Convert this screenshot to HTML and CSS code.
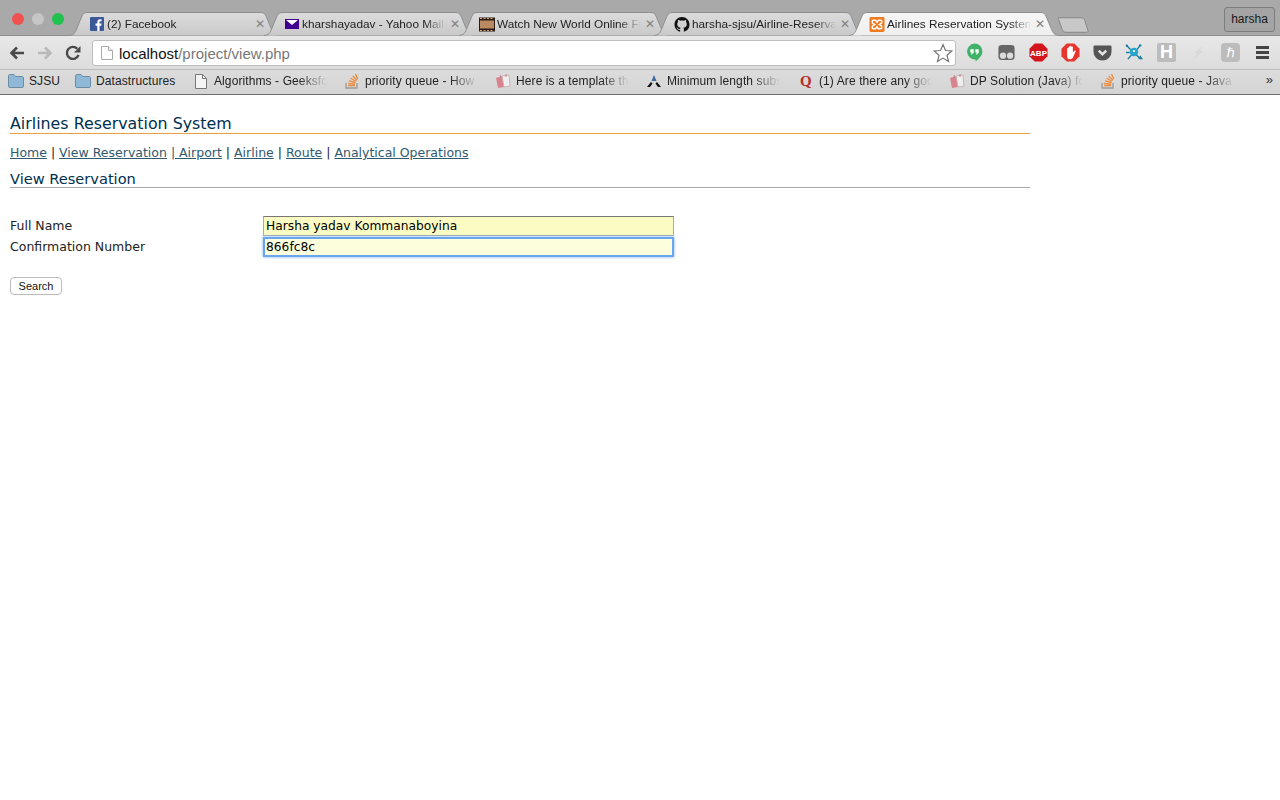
FILE: index.html
```html
<!DOCTYPE html>
<html>

<head>
    <meta name="viewport" content="width=device-width, minimum-scale=1">
    <title>Airlines Reservation System</title>
    <link rel="stylesheet" href="styles.css">
</head>

<body>
    <!-- browser window chrome -->
    <div class="chrome">
        <div class="tabstrip">
            <div class="lights">
                <span class="light light-red"></span>
                <span class="light light-grey"></span>
                <span class="light light-green"></span>
            </div>
            <div class="tabs">
                <div class="tab">
                    <svg class="tab-shape" viewBox="0 0 210 24" preserveAspectRatio="none"><defs><linearGradient id="inactive-tab" x1="0" y1="0" x2="0" y2="1"><stop offset="0" stop-color="#dcdcdc"/><stop offset="1" stop-color="#c9c9c9"/></linearGradient><linearGradient id="active-tab" x1="0" y1="0" x2="0" y2="1"><stop offset="0" stop-color="#f6f6f6"/><stop offset="1" stop-color="#efefef"/></linearGradient></defs><path d="M0 23.500C5 23 6 21 8 16L13 4C14 1.500 15.500 .5 19 .5H191C194.500 .5 196 1.500 197 4L202 16C204 21 205 23 210 23.500" fill="url(#inactive-tab)" stroke="#8f8f8f"/></svg>
                    <svg class="favicon" viewBox="0 0 14 14"><rect width="14" height="14" rx="1" fill="#3b5998"/><path d="M9.500 14V8.700H11.300L11.600 6.600H9.500V5.300C9.500 4.700 9.700 4.300 10.500 4.300H11.600V2.400C11.400 2.400 10.800 2.300 10 2.300 8.400 2.300 7.300 3.300 7.300 5.100V6.600H5.500V8.700H7.300V14Z" fill="#fff"/></svg>
                    <span class="tab-title">(2) Facebook</span>
                    <span class="tab-close">✕</span>
                </div>
                <div class="tab">
                    <svg class="tab-shape" viewBox="0 0 210 24" preserveAspectRatio="none"><path d="M0 23.500C5 23 6 21 8 16L13 4C14 1.500 15.500 .5 19 .5H191C194.500 .5 196 1.500 197 4L202 16C204 21 205 23 210 23.500" fill="url(#inactive-tab)" stroke="#8f8f8f"/></svg>
                    <svg class="favicon" viewBox="0 0 14 14"><rect y="2" width="14" height="10" fill="#400090"/><path d="M1 3L7 8 13 3" fill="#fff"/></svg>
                    <span class="tab-title">kharshayadav - Yahoo Mail</span>
                    <span class="tab-close">✕</span>
                </div>
                <div class="tab">
                    <svg class="tab-shape" viewBox="0 0 210 24" preserveAspectRatio="none"><path d="M0 23.500C5 23 6 21 8 16L13 4C14 1.500 15.500 .5 19 .5H191C194.500 .5 196 1.500 197 4L202 16C204 21 205 23 210 23.500" fill="url(#inactive-tab)" stroke="#8f8f8f"/></svg>
                    <svg class="favicon favicon-wide" viewBox="0 0 16 14"><rect width="16" height="14" fill="#2b1a10"/><rect x="1" y="3" width="14" height="8" fill="#b98a62"/><path d="M1 1H3M4.500 1H6.500M8 1H10M11.500 1H13.500M1 13H3M4.500 13H6.500M8 13H10M11.500 13H13.500" stroke="#c9a583" stroke-width="1"/></svg>
                    <span class="tab-title">Watch New World Online Free</span>
                    <span class="tab-close">✕</span>
                </div>
                <div class="tab">
                    <svg class="tab-shape" viewBox="0 0 210 24" preserveAspectRatio="none"><path d="M0 23.500C5 23 6 21 8 16L13 4C14 1.500 15.500 .5 19 .5H191C194.500 .5 196 1.500 197 4L202 16C204 21 205 23 210 23.500" fill="url(#inactive-tab)" stroke="#8f8f8f"/></svg>
                    <svg class="favicon favicon-wide" viewBox="0 0 16 16"><path fill="#111" d="M8 0C3.580 0 0 3.580 0 8c0 3.540 2.290 6.530 5.470 7.590.4.070.55-.17.55-.38 0-.19-.01-.82-.01-1.490-2.010.37-2.530-.49-2.690-.94-.09-.23-.48-.94-.82-1.130-.28-.15-.68-.52-.01-.53.63-.01 1.080.58 1.230.82.720 1.210 1.870.870 2.330.660.070-.520.280-.870.510-1.070-1.780-.2-3.640-.89-3.640-3.950 0-.870.310-1.590.820-2.150-.080-.2-.360-1.020.080-2.120 0 0 .670-.210 2.200.820.640-.180 1.320-.270 2-.270s1.360.090 2 .270c1.530-1.040 2.200-.820 2.200-.820.440 1.100.160 1.920.080 2.120.510.560.820 1.270.820 2.150 0 3.070-1.870 3.750-3.650 3.950.290.250.540.730.540 1.480 0 1.070-.010 1.930-.010 2.200 0 .210.150.460.550.380A8.013 8.013 0 0016 8c0-4.420-3.580-8-8-8z"/></svg>
                    <span class="tab-title">harsha-sjsu/Airline-Reservation</span>
                    <span class="tab-close">✕</span>
                </div>
                <div class="tab tab-active">
                    <svg class="tab-shape" viewBox="0 0 210 24" preserveAspectRatio="none"><path d="M0 23.500C5 23 6 21 8 16L13 4C14 1.500 15.500 .5 19 .5H191C194.500 .5 196 1.500 197 4L202 16C204 21 205 23 210 23.500" fill="url(#active-tab)" stroke="#8f8f8f"/></svg>
                    <svg class="favicon favicon-wide" viewBox="0 0 16 16"><rect width="16" height="16" rx="1.500" fill="#f07c22"/><path d="M4 3.500H6.500L8 5.500 9.500 3.500H12C13.500 3.500 13.500 6.500 12 7L10.500 8 12 9C13.500 9.500 13.500 12.500 12 12.500H9.500L8 10.500 6.500 12.500H4C2.500 12.500 2.500 9.500 4 9L5.500 8 4 7C2.500 6.500 2.500 3.500 4 3.500Z" fill="none" stroke="#fff" stroke-width="1.600"/></svg>
                    <span class="tab-title">Airlines Reservation System</span>
                    <span class="tab-close">✕</span>
                </div>
                <svg class="new-tab" viewBox="0 0 32 16"><path d="M.5 .5H24C26 .5 27 1.500 27.500 3L31 14C31.300 15 30.500 15.500 29.500 15.500H8C6 15.500 5 14.500 4.500 13L.5 2C.2 1 0 .5 .5 .5Z" fill="#c8c8c8" stroke="#858585"/></svg>
            </div>
            <div class="profile">harsha</div>
        </div>

        <div class="toolbar">
            <svg class="nav-icon" viewBox="0 0 16 16"><path d="M15 8H3M8 2.500L2.500 8 8 13.500" fill="none" stroke="#4a4a4a" stroke-width="2.600"/></svg>
            <svg class="nav-icon" viewBox="0 0 16 16"><path d="M1 8H13M8 2.500L13.500 8 8 13.500" fill="none" stroke="#b9b9b9" stroke-width="2.600"/></svg>
            <svg class="nav-icon" viewBox="0 0 16 16"><path d="M13.500 10A6 6 0 1 1 12.300 3.800" fill="none" stroke="#4a4a4a" stroke-width="2.400"/><path d="M15.500 1V7.500H9Z" fill="#4a4a4a"/></svg>
            <div class="omnibox">
                <svg class="page-icon" viewBox="0 0 12 14"><path d="M.5 .5H7.500L11.500 4.500V13.500H.5Z" fill="#fff" stroke="#aaa"/><path d="M7.500 .5V4.500H11.500" fill="#eee" stroke="#aaa"/></svg>
                <span class="url"><span class="url-host">localhost</span>/project/view.php</span>
                <svg class="star" viewBox="0 0 20 20"><path d="M10 1.500L12.500 7.500 18.800 8 14 12.200 15.500 18.500 10 15.100 4.500 18.500 6 12.200 1.200 8 7.500 7.500Z" fill="#fff" stroke="#777" stroke-width="1.200"/></svg>
            </div>
            <div class="extensions">
                <svg class="ext" viewBox="1.500 1 17 18"><path d="M10 1.500A7.500 7.500 0 0 1 17.500 9C17.500 13 14 16 11 18.500V16.500A7.500 7.500 0 0 1 10 1.500Z" fill="#3fb267"/><path d="M6 7H9.300V10.300L7.500 12H6.500L7.500 10H6ZM10.800 7H14V10.300L12.300 12H11.300L12.300 10H10.800Z" fill="#fff"/></svg>
                <svg class="ext" viewBox="0 0 20 20"><rect x="1.500" y="2" width="17" height="16" rx="3.500" fill="#666"/><circle cx="6.300" cy="13.300" r="3.300" fill="#ddd"/><circle cx="13.700" cy="13.300" r="3.300" fill="#ddd"/></svg>
                <svg class="ext" viewBox="0 0 20 20"><path d="M6 .5H14L19.500 6V14L14 19.500H6L.5 14V6Z" fill="#d3141c"/><text x="10" y="13.300" class="ext-abp">ABP</text></svg>
                <svg class="ext" viewBox="0 0 20 20"><path d="M6 .5H14L19.500 6V14L14 19.500H6L.5 14V6Z" fill="#e5352c"/><path d="M6.500 10V6C6.500 5 8 5 8 6V4.200C8 3.200 9.500 3.200 9.500 4.200V3.700C9.500 2.700 11 2.700 11 3.700V4.500C11 3.500 12.500 3.500 12.500 4.500V10L14 8.300C15 7.500 15.800 8.300 15.200 9.200L12.500 15.500C12 16.500 11 17 10 17H9C7.500 17 6.500 16 6.500 14.500Z" fill="#fff"/></svg>
                <svg class="ext" viewBox="0 0 20 20"><path d="M2 2.500H18C19 2.500 19.500 3 19.500 4V9.500A9.500 9 0 0 1 .5 9.500V4C.5 3 1 2.500 2 2.500Z" fill="#555"/><path d="M6 8L10 11.800 14 8" fill="none" stroke="#e4e4e4" stroke-width="2.600"/></svg>
                <svg class="ext" viewBox="0 0 20 20"><path d="M2 3L6 7M16 2.500L12.500 7M3 17L7 12.500M11.500 12L15 15.500M1 10H5" stroke="#1a7f9e" stroke-width="1.500"/><circle cx="9.500" cy="9.500" r="4.500" fill="#27a5cc"/><circle cx="9.500" cy="8.500" r="1.200" fill="#fff"/><path d="M14 17L19 17 16 13Z" fill="#1a7f9e"/><circle cx="2" cy="3" r="1.300" fill="#1a7f9e"/><circle cx="16" cy="2.500" r="1.300" fill="#1a7f9e"/></svg>
                <div class="ext ext-tile ext-h">H</div>
                <svg class="ext" viewBox="0 0 20 20"><path d="M16 2L5 10.500 9 11 3.500 18.500 15.500 8.500 11 8Z" fill="#d9d9d9"/></svg>
                <div class="ext ext-tile ext-k">ℏ</div>
                <div class="menu-icon"><span></span><span></span><span></span></div>
            </div>
        </div>

        <div class="bookmarks">
            <div class="bookmark bookmark-sjsu">
                <svg class="bm-icon" viewBox="0 0 16 14"><path d="M.5 2C.5 1 1 .5 2 .5H6L7.500 2.500H14C15 2.500 15.500 3 15.500 4V12C15.500 13 15 13.500 14 13.500H2C1 13.500 .5 13 .5 12Z" fill="#8fb8d6" stroke="#6c8ca4"/></svg>
                <span>SJSU</span>
            </div>
            <div class="bookmark bookmark-ds">
                <svg class="bm-icon" viewBox="0 0 16 14"><path d="M.5 2C.5 1 1 .5 2 .5H6L7.500 2.500H14C15 2.500 15.500 3 15.500 4V12C15.500 13 15 13.500 14 13.500H2C1 13.500 .5 13 .5 12Z" fill="#8fb8d6" stroke="#6c8ca4"/></svg>
                <span>Datastructures</span>
            </div>
            <div class="bookmark bookmark-long">
                <svg class="bm-icon bm-page" viewBox="0 0 12 15"><path d="M.5 .5H7.500L11.500 4.500V14.500H.5Z" fill="#f4f4f4" stroke="#777"/><path d="M7.500 .5V4.500H11.500" fill="none" stroke="#777"/></svg>
                <span class="bm-title">Algorithms - Geeksforgeeks</span>
            </div>
            <div class="bookmark bookmark-long">
                <svg class="bm-icon bm-so" viewBox="0 0 16 16"><path d="M2 10V15H13V10" fill="none" stroke="#9a9a9a" stroke-width="1.300"/><path d="M4 12.500H11M4.200 10.300L11 11.200M5 7.800L11.400 9.500M6.500 5.300L12 8.300M8.700 3L13 7.300M11.500 1L13.700 6" stroke="#ee8a3a" stroke-width="1.300"/></svg>
                <span class="bm-title">priority queue - How to</span>
            </div>
            <div class="bookmark bookmark-long">
                <svg class="bm-icon bm-gift" viewBox="0 0 16 16"><path d="M1 5L7 3 9 14 3 15Z" fill="#d8848e"/><path d="M7 3L14 2 15 13 9 14Z" fill="#eee" stroke="#c4a7ab" stroke-width=".8"/><path d="M5 2L6 5M11 1L11 4" stroke="#c4838c"/></svg>
                <span class="bm-title">Here is a template that</span>
            </div>
            <div class="bookmark bookmark-min">
                <svg class="bm-icon" viewBox="0 0 16 14"><path d="M8 1L10.500 7H5.500Z" fill="#3d6a9a"/><path d="M5 8L1 13H4L6.500 9.500ZM11 8L15 13H12L9.500 9.500Z" fill="#111"/></svg>
                <span class="bm-title">Minimum length subsequence</span>
            </div>
            <div class="bookmark bookmark-long">
                <span class="bm-quora">Q</span>
                <span class="bm-title">(1) Are there any good</span>
            </div>
            <div class="bookmark bookmark-long">
                <svg class="bm-icon bm-gift" viewBox="0 0 16 16"><path d="M1 5L7 3 9 14 3 15Z" fill="#d8848e"/><path d="M7 3L14 2 15 13 9 14Z" fill="#eee" stroke="#c4a7ab" stroke-width=".8"/><path d="M5 2L6 5M11 1L11 4" stroke="#c4838c"/></svg>
                <span class="bm-title">DP Solution (Java) for</span>
            </div>
            <div class="bookmark bookmark-long">
                <svg class="bm-icon bm-so" viewBox="0 0 16 16"><path d="M2 10V15H13V10" fill="none" stroke="#9a9a9a" stroke-width="1.300"/><path d="M4 12.500H11M4.200 10.300L11 11.200M5 7.800L11.400 9.500M6.500 5.300L12 8.300M8.700 3L13 7.300M11.500 1L13.700 6" stroke="#ee8a3a" stroke-width="1.300"/></svg>
                <span class="bm-title">priority queue - Java</span>
            </div>
            <span class="bm-more">»</span>
        </div>
    </div>

    <!-- the page -->
    <div class="page">
        <h1 class="page-title">Airlines Reservation System</h1>
        <div class="nav">
            <a href="#">Home</a> | <a href="#">View Reservation</a> <a href="#">| Airport</a> | <a href="#">Airline</a> | <a href="#">Route</a> | <a href="#">Analytical Operations</a>
        </div>
        <h2 class="section-title">View Reservation</h2>

        <form class="search-form">
            <div class="field">
                <label for="full-name">Full Name</label>
                <input id="full-name" type="text" value="Harsha yadav Kommanaboyina">
            </div>
            <div class="field">
                <label for="conf-number">Confirmation Number</label>
                <input id="conf-number" class="focused" type="text" value="866fc8c">
            </div>
            <button type="button" class="search-btn">Search</button>
        </form>
    </div>
</body>

</html>
```

FILE: styles.css
```css
* {
    box-sizing: border-box;
    margin: 0;
    padding: 0;
}

body {
    background: #fff;
    font-family: "DejaVu Sans", sans-serif;
    height: 800px;
    overflow: hidden;
}

/* browser chrome */
.chrome {
    height: 95px;
    border-bottom: 1px solid #6f6f6f;
    background: linear-gradient(#f4f4f4, #d4d4d4);
    font-family: "Liberation Sans", sans-serif;
}

.tabstrip {
    height: 36px;
    background: #a9a9a9;
    display: flex;
    position: relative;
    border-bottom: 1px solid #8f8f8f;
}

.lights {
    display: flex;
    gap: 8px;
    width: 69px;
    padding: 13px 0 0 12px;
}

.light {
    width: 12px;
    height: 12px;
    border-radius: 50%;
}

.light-red { background: #f0524f; }
.light-grey { background: #c6c6c6; }
.light-green { background: #1fc14f; }

.tabs {
    display: flex;
    padding-top: 12px;
}

.tab {
    position: relative;
    width: 210px;
    height: 24px;
    margin-right: -15px;
    padding: 5px 13px 0 21px;
    display: flex;
    align-items: flex-start;
    color: #222;
    font-size: 11.800px;
}

.tab-shape {
    position: absolute;
    left: 0;
    top: 0;
    width: 100%;
    height: 100%;
}

.tab-active {
    z-index: 2;
}

.favicon {
    position: relative;
    width: 14px;
    height: 14px;
    margin-right: 3px;
    flex: none;
}

.favicon-wide {
    width: 16px;
    height: 15px;
    margin-left: -1px;
    margin-right: 2px;
}

.tab-title {
    position: relative;
    flex: 1;
    min-width: 0;
    height: 15px;
    line-height: 15px;
    white-space: nowrap;
    overflow: hidden;
    -webkit-mask-image: linear-gradient(90deg, #000 85%, transparent);
    mask-image: linear-gradient(90deg, #000 85%, transparent);
}

.tab-close {
    position: relative;
    flex: none;
    width: 12px;
    margin-left: 3px;
    font-size: 12px;
    line-height: 15px;
    color: #808080;
    text-align: center;
    font-family: "DejaVu Sans", sans-serif;
}

.new-tab {
    width: 31px;
    height: 16px;
    margin: 5px 0 0 14px;
}

.profile {
    position: absolute;
    right: 5px;
    top: 7px;
    width: 51px;
    height: 25px;
    border: 1px solid #7d7d7d;
    border-radius: 3px;
    background: #a4a4a4;
    font-size: 12px;
    line-height: 23px;
    text-align: center;
    color: #1a1a1a;
}

.toolbar {
    height: 33px;
    display: flex;
    align-items: center;
    padding: 0 0 0 9px;
}

.nav-icon {
    width: 16px;
    height: 16px;
    margin-right: 12px;
    flex: none;
}

.nav-icon:nth-of-type(3) {
    margin-right: 11px;
}

.omnibox {
    width: 864px;
    height: 26px;
    border: 1px solid #bdbdbd;
    border-radius: 3px;
    background: #fff;
    display: flex;
    align-items: center;
    padding-left: 8px;
    flex: none;
}

.page-icon {
    width: 12px;
    height: 14px;
    flex: none;
}

.url {
    margin-left: 6px;
    padding-top: 1px;
    font-family: "Liberation Sans", sans-serif;
    font-size: 15px;
    color: #777;
}

.url-host {
    color: #111;
}

.star {
    width: 20px;
    height: 20px;
    margin-left: auto;
    margin-right: 2px;
}

.extensions {
    display: flex;
    align-items: center;
    padding-left: 9px;
    gap: 13px;
}

.ext {
    width: 19px;
    height: 19px;
    flex: none;
}

.ext-abp {
    font-family: "Liberation Sans", sans-serif;
    font-size: 8.500px;
    font-weight: bold;
    fill: #fff;
    text-anchor: middle;
}

.ext-tile {
    background: #bcbcbc;
    border-radius: 2px;
    color: #fff;
    font-weight: bold;
    text-align: center;
    line-height: 19px;
}

.ext-h {
    font-size: 18px;
}

.ext-k {
    font-family: "DejaVu Sans", sans-serif;
    font-weight: normal;
    font-size: 13px;
    border-radius: 4px;
}

.menu-icon {
    width: 13px;
    display: flex;
    flex-direction: column;
    gap: 2px;
    margin-left: 3px;
}

.menu-icon span {
    height: 3px;
    background: #444;
}

.bookmarks {
    height: 25px;
    border-top: 1px solid #bcbcbc;
    display: flex;
    align-items: center;
    padding: 0 0 2px 8px;
    font-size: 12px;
    letter-spacing: .1px;
    color: #222;
    position: relative;
}

.bookmark {
    display: flex;
    align-items: center;
    gap: 5px;
    flex: none;
}

.bookmark-sjsu {
    width: 67px;
}

.bookmark-ds {
    width: 118px;
}

.bookmark-long {
    width: 151px;
}

.bookmark-min {
    width: 152px;
}

.bm-icon {
    width: 16px;
    height: 14px;
    flex: none;
}

.bm-page {
    height: 15px;
}

.bm-so,
.bm-gift {
    height: 16px;
}

.bm-title {
    width: 113px;
    white-space: nowrap;
    overflow: hidden;
    -webkit-mask-image: linear-gradient(90deg, #000 75%, transparent);
    mask-image: linear-gradient(90deg, #000 75%, transparent);
}

.bm-quora {
    width: 16px;
    text-align: center;
    font-family: "Liberation Serif", serif;
    font-weight: bold;
    font-size: 15px;
    line-height: 15px;
    color: #b92b27;
}

.bm-more {
    position: absolute;
    right: 7px;
    top: 1px;
    font-size: 13px;
    line-height: 18px;
    color: #333;
}

/* page content */
.page {
    padding: 19px 0 0 10px;
    width: 1030px;
    color: #111;
    font-size: 12.500px;
}

.page-title {
    font-size: 15.850px;
    font-weight: normal;
    line-height: 19px;
    color: #00304f;
    border-bottom: 1px solid #e9a23b;
}

.nav {
    margin-top: 10px;
    font-size: 12.500px;
    line-height: 18px;
    color: #222;
}

.nav a {
    color: #30586f;
}

.section-title {
    margin-top: 9px;
    font-size: 14.600px;
    font-weight: normal;
    line-height: 16px;
    color: #00304f;
    border-bottom: 1px solid #aaa;
}

.search-form {
    margin-top: 27px;
}

.field {
    display: flex;
    align-items: center;
    height: 21px;
}

.field label {
    width: 253px;
    flex: none;
    color: #222;
}

.field input {
    width: 411px;
    height: 20px;
    border: 1px solid #aaa;
    border-top-color: #777;
    background: #fbfcc4;
    padding: 0 2px;
    font-family: "DejaVu Sans", sans-serif;
    font-size: 12.250px;
    color: #000;
    outline: none;
}

.field input.focused {
    background: #fdfedb;
    border: 2px solid #68a6ef;
    box-shadow: 0 0 3px #7eb4f5;
    padding: 0 1px;
}

.search-btn {
    display: block;
    margin-top: 20px;
    width: 52px;
    height: 18px;
    border: 1px solid #bbb;
    border-radius: 4px;
    background: #fff;
    font-family: "Liberation Sans", sans-serif;
    font-size: 11px;
    color: #111;
}
```
